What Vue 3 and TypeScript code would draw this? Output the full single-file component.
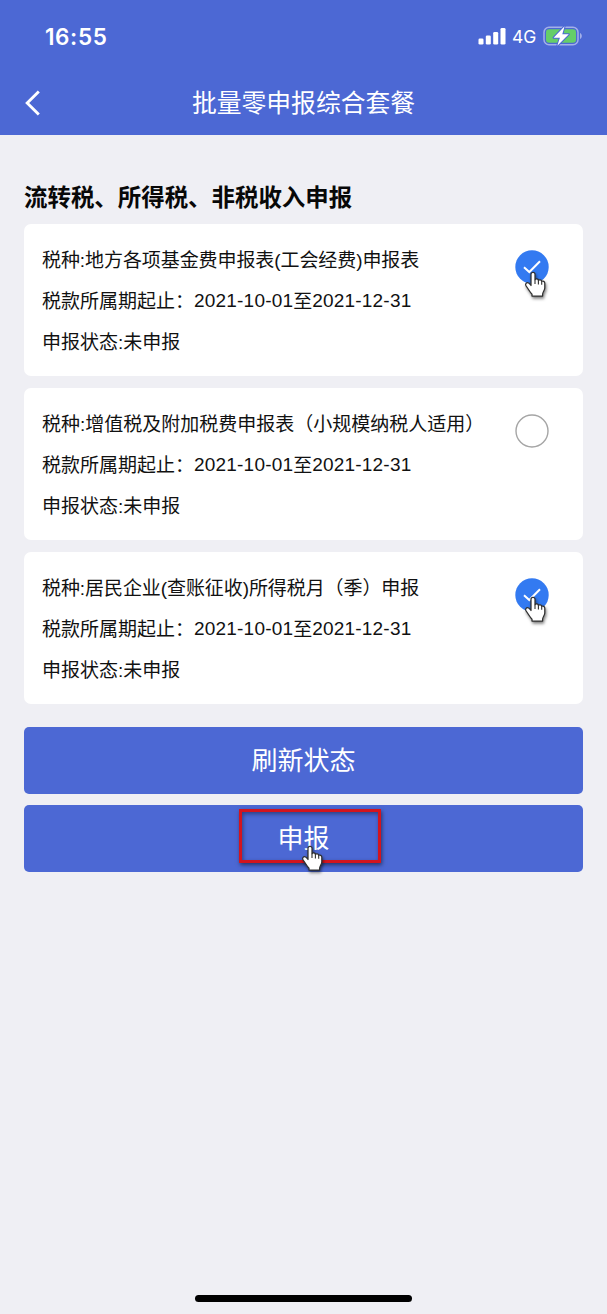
<script setup lang="ts">
interface Declaration {
  name: string
  from: string
  to: string
  status: string
  selected: boolean
}

const declarations: Declaration[] = [
  { name: '地方各项基金费申报表(工会经费)申报表', from: '2021-10-01', to: '2021-12-31', status: '未申报', selected: true },
  { name: '增值税及附加税费申报表（小规模纳税人适用）', from: '2021-10-01', to: '2021-12-31', status: '未申报', selected: false },
  { name: '居民企业(查账征收)所得税月（季）申报', from: '2021-10-01', to: '2021-12-31', status: '未申报', selected: true },
]

const handPath =
  'M7 13.6V3.2C7 .6 11 .6 11 3.2V8.7C11.7 7.5 14.1 7.8 14.4 9.3C15.4 8.3 17.5 8.8 17.7 10.3C19 9.6 20.8 10.5 20.8 12.2V17C20.8 19.3 18.6 21.2 18.6 23.3V25H8V23.2C6 21.3 4.2 17.7 2.2 15.1C.7 12.9 2.6 11.1 4.6 12C5.7 12.5 6.2 13.4 7 14.5Z'
</script>

<template>
  <div class="screen">
    <header class="header">
      <div class="status-bar">
        <span class="clock">16:55</span>
        <div class="indicators">
          <svg class="signal" width="28" height="18" viewBox="0 0 28 18" fill="#fff">
            <rect x="0.5" y="11.5" width="5" height="6" rx="1.3" />
            <rect x="7.8" y="8.5" width="5" height="9" rx="1.3" />
            <rect x="15.2" y="5" width="5" height="12.5" rx="1.3" />
            <rect x="22.5" y="1" width="5" height="16.5" rx="1.3" />
          </svg>
          <span class="network">4G</span>
          <svg class="battery" width="40" height="22" viewBox="0 0 40 22">
            <rect x="1" y="2.2" width="34" height="17.6" rx="5" fill="none" stroke="#a3afe9" stroke-width="1.5" />
            <rect x="3" y="4.2" width="30" height="13.6" rx="3" fill="#65ce68" />
            <path d="M37 8v6c2.4-1 2.4-5 0-6z" fill="#a3afe9" />
            <path d="M21.6 1.3L10.6 12.8h6.3l-2.6 8L25.8 9.2h-6.5z" fill="#fff" stroke="#4c68d4" stroke-width="2" stroke-linejoin="round" paint-order="stroke" />
          </svg>
        </div>
      </div>
      <nav class="nav">
        <svg class="back" width="18" height="28" viewBox="0 0 18 28" fill="none">
          <path d="M14.8 2.5L3.2 14L14.8 25.5" stroke="#fff" stroke-width="2.9" />
        </svg>
        <h1 class="title">批量零申报综合套餐</h1>
      </nav>
    </header>

    <main class="content">
      <h2 class="section-title">流转税、所得税、非税收入申报</h2>

      <section v-for="item in declarations" :key="item.name" class="card">
        <div class="details">
          <p :class="{ tight: item.name.includes('(') }">税种:{{ item.name }}</p>
          <p>税款所属期起止：<span class="date">{{ item.from }}</span>至<span class="date">{{ item.to }}</span></p>
          <p>申报状态:{{ item.status }}</p>
        </div>
        <div class="choice">
          <svg width="34" height="34" viewBox="0 0 34 34">
            <template v-if="item.selected">
              <circle cx="17" cy="17" r="16.7" fill="#337af1" />
              <path d="M9 17.3L14.3 22L25 11.2" fill="none" stroke="#fff" stroke-width="2" />
            </template>
            <circle v-else cx="17" cy="17" r="16" fill="#fff" stroke="#a5a5a5" stroke-width="1.4" />
          </svg>
          <svg v-if="item.selected" class="hand" width="23" height="27" viewBox="0 0 23 27">
            <path :d="handPath" fill="#fff" stroke="#303030" stroke-width="1.25" stroke-linejoin="round" />
            <path d="M11 8.7V13M14.4 9.5V13.4M17.7 10.5V13.8" stroke="#303030" stroke-width="1.1" />
          </svg>
        </div>
      </section>

      <div class="actions">
        <button class="action" type="button">刷新状态</button>
        <button class="action" type="button">
          <span>申报</span>
          <span class="highlight"></span>
          <svg class="hand" width="23" height="27" viewBox="0 0 23 27">
            <path :d="handPath" fill="#fff" stroke="#303030" stroke-width="1.25" stroke-linejoin="round" />
            <path d="M11 8.7V13M14.4 9.5V13.4M17.7 10.5V13.8" stroke="#303030" stroke-width="1.1" />
          </svg>
        </button>
      </div>
    </main>

    <div class="home-indicator"></div>
  </div>
</template>

<style>
body {
  margin: 0;
  background: #efeff4;
}
</style>

<style scoped>
.screen {
  box-sizing: border-box;
  display: flex;
  flex-direction: column;
  width: 607px;
  height: 1314px;
  padding-bottom: 12px;
  overflow: hidden;
  background: #efeff4;
  color: #111;
  font-family: "Liberation Sans", "Noto Sans CJK SC", sans-serif;
}

.header {
  flex: none;
  height: 135px;
  background: #4c68d4;
  color: #fff;
}

.status-bar {
  display: flex;
  align-items: center;
  justify-content: space-between;
  height: 72px;
  padding: 0 24px 0 45px;
}

.clock {
  padding-top: 2px;
  font: 600 22.5px/30px Inter, sans-serif;
  letter-spacing: 0.6px;
}

.indicators {
  display: flex;
  align-items: center;
}

.network {
  width: 24px;
  margin: 2px 7px 0 6px;
  font: 400 17.5px/22px Inter, sans-serif;
}

.nav {
  display: grid;
  grid-template-columns: 60px 1fr 60px;
  align-items: center;
  height: 62px;
}

.back {
  margin-left: 24px;
}

.title {
  margin: 2px 0 0;
  font-size: 24.8px;
  font-weight: 400;
  line-height: 36px;
  text-align: center;
  white-space: nowrap;
}

.content {
  flex: 1;
  padding: 45px 24px 0;
}

.section-title {
  margin: 0 0 8px;
  color: #080808;
  font-size: 23.45px;
  font-weight: 700;
  line-height: 36px;
  white-space: nowrap;
}

.card {
  box-sizing: border-box;
  display: flex;
  justify-content: space-between;
  height: 152px;
  margin-bottom: 12px;
  padding: 16px 34px 0 18px;
  border-radius: 7px;
  background: #fff;
}

.details p {
  margin: 0;
  font-size: 19px;
  line-height: 41px;
  white-space: nowrap;
}

.details .tight {
  letter-spacing: -0.08px;
}

.date {
  position: relative;
  top: -1px;
  letter-spacing: 0.2px;
}

.choice {
  position: relative;
  width: 34px;
  height: 34px;
  margin-top: 10px;
}

.choice svg {
  display: block;
}

.hand {
  position: absolute;
  filter: drop-shadow(1px 2px 1.5px rgba(0, 0, 0, 0.5));
}

.choice .hand {
  left: 9px;
  top: 21px;
}

.card:nth-of-type(3) .hand {
  top: 18px;
}

.actions {
  display: grid;
  gap: 11px;
  margin-top: 23px;
}

.action {
  position: relative;
  height: 67px;
  padding: 0;
  border: 0;
  border-radius: 5px;
  background: #4c68d4;
  color: #fff;
  font-family: inherit;
  font-size: 26px;
  font-weight: 400;
  line-height: 68px;
}

.highlight {
  position: absolute;
  left: 215px;
  top: 4px;
  box-sizing: border-box;
  width: 142px;
  height: 54px;
  border: 3px solid #d3141e;
  box-shadow: 1px 2px 4px rgba(0, 0, 0, 0.5), inset 1px 2px 4px rgba(0, 0, 0, 0.4);
}

.action .hand {
  left: 277px;
  top: 40px;
}

.home-indicator {
  flex: none;
  align-self: center;
  width: 217px;
  height: 7px;
  border-radius: 4px;
  background: #000;
}
</style>
